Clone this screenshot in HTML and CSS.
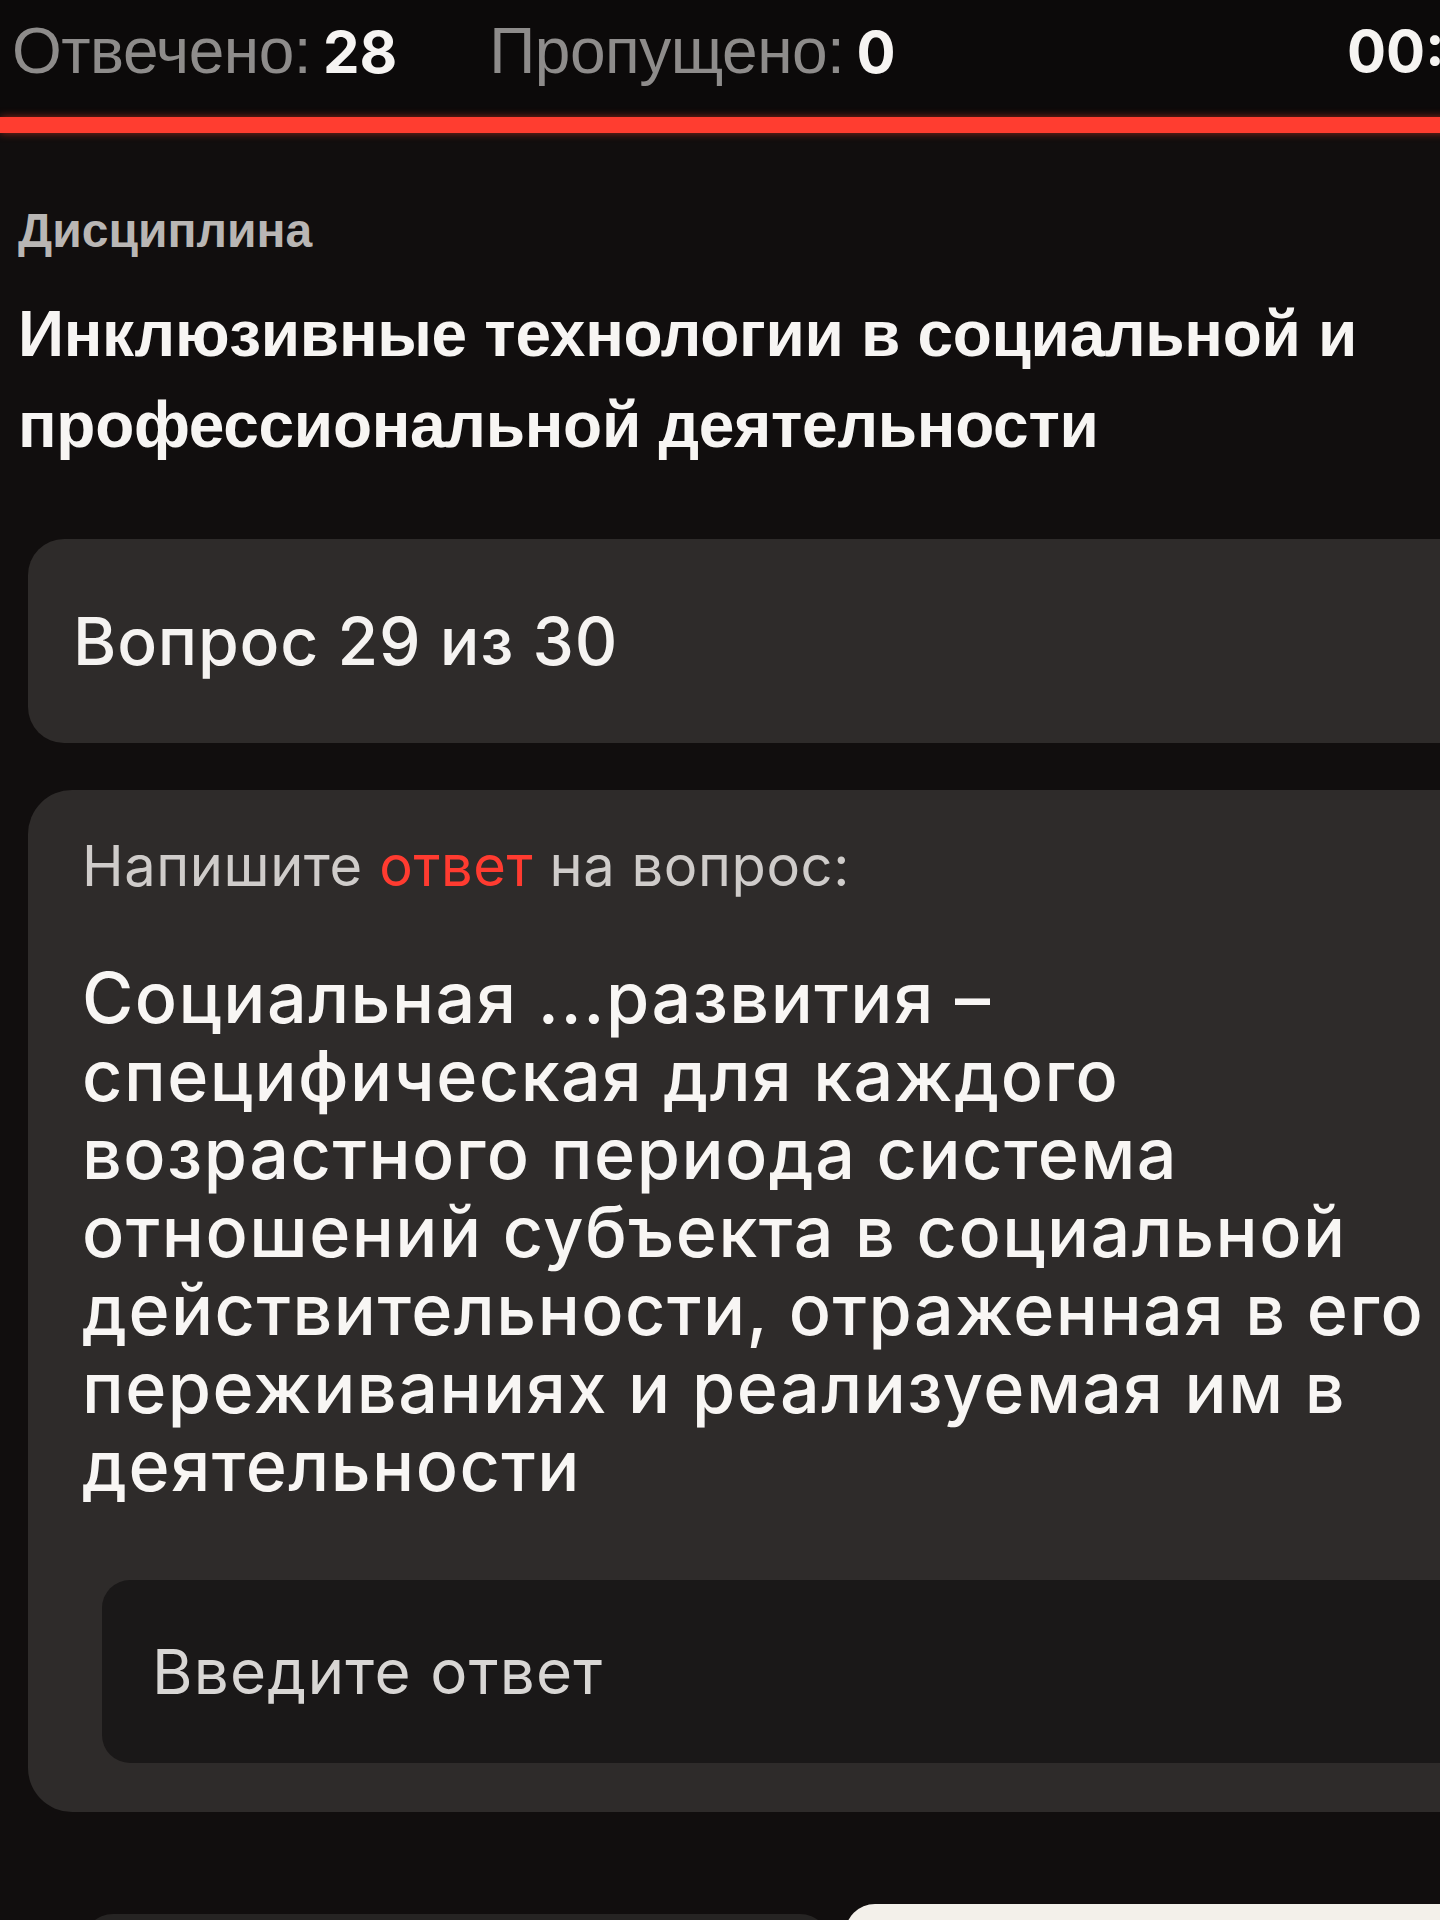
FILE: index.html
```html
<!DOCTYPE html>
<html lang="ru">
<head>
<meta charset="utf-8">
<title>Вопрос 29 из 30</title>
<link rel="stylesheet" href="styles.css">
</head>
<body>
<div class="viewport">
  <div class="page">
    <header class="stats">
      <div class="stat"><span class="stat-label">Отвечено:</span> <span class="stat-value">28</span></div>
      <div class="stat"><span class="stat-label">Пропущено:</span> <span class="stat-value">0</span></div>
      <div class="timer">00:14</div>
    </header>
    <div class="progress"></div>

    <section class="discipline">
      <div class="discipline-label">Дисциплина</div>
      <h1 class="discipline-title">Инклюзивные технологии в социальной и<br>профессиональной деятельности</h1>
    </section>

    <div class="card card-counter">
      <span class="counter-text">Вопрос 29 из 30</span>
    </div>

    <div class="card card-question">
      <p class="prompt">Напишите <span class="accent">ответ</span> на вопрос:</p>
      <p class="question">Социальная ...развития –<br>специфическая для каждого<br>возрастного периода система<br>отношений субъекта в социальной<br>действительности, отраженная в его<br>переживаниях и реализуемая им в<br>деятельности</p>
      <div class="answer-input">
        <span class="placeholder">Введите ответ</span>
      </div>
    </div>

    <div class="actions">
      <div class="btn btn-secondary"></div>
      <div class="btn btn-primary"></div>
    </div>
  </div>
</div>
</body>
</html>
```

FILE: styles.css
```css
html, body {
  margin: 0;
  padding: 0;
  background: #0e0c0c;
}

.viewport {
  width: 1440px;
  height: 1920px;
  overflow: hidden;
  background: #110e0e;
}

.page {
  width: 1600px;
}

.stats {
  box-sizing: border-box;
  height: 117px;
  padding: 0 53px 15px 12px;
  display: flex;
  align-items: center;
  gap: 92px;
  background: #0c0a0a;
}

.stat {
  display: flex;
  align-items: baseline;
  gap: 12px;
  white-space: nowrap;
}

.stat-label {
  font-family: "Liberation Sans", Arial, sans-serif;
  font-size: 64px;
  letter-spacing: -0.5px;
  color: #8e8c8b;
}

.stat-value {
  font-family: Inter, "Liberation Sans", sans-serif;
  font-weight: 700;
  font-size: 58px;
  color: #f6f4f2;
}

.timer {
  margin-left: auto;
  width: 200px;
  font-family: Inter, "Liberation Sans", sans-serif;
  font-weight: 700;
  font-size: 58px;
  color: #f6f4f2;
  white-space: nowrap;
}

.progress {
  height: 16px;
  background: #ff3d30;
  box-shadow: 0 0 8px rgba(255, 60, 40, 0.55);
}

.discipline {
  padding: 70px 0 0 18px;
  font-family: "Liberation Sans", Arial, sans-serif;
}

.discipline-label {
  font-size: 48px;
  line-height: 55px;
  font-weight: 700;
  color: #b9b6b4;
}

.discipline-title {
  margin: 31px 0 0;
  font-size: 64px;
  line-height: 91px;
  font-weight: 700;
  color: #f7f5f3;
  letter-spacing: -0.3px;
}

.card {
  margin-left: 28px;
  background: #2e2b2a;
  border-radius: 36px;
  font-family: Inter, "Noto Sans", sans-serif;
}

.card-counter {
  margin-top: 68px;
  height: 204px;
  display: flex;
  align-items: center;
  padding-left: 45px;
}

.counter-text {
  font-size: 66px;
  font-weight: 500;
  color: #f5f3f1;
  letter-spacing: 0.8px;
}

.card-question {
  margin-top: 47px;
  padding: 43px 0 49px 54px;
  border-radius: 44px;
}

.prompt {
  margin: 0;
  font-size: 56px;
  line-height: 67px;
  font-weight: 400;
  color: #cfccca;
  letter-spacing: 0.6px;
}

.accent {
  color: #ff3b30;
}

.question {
  margin: 59px 0 0;
  font-size: 70px;
  line-height: 78px;
  font-weight: 500;
  color: #f8f6f4;
  letter-spacing: 1.5px;
}

.answer-input {
  margin: 75px 0 0 20px;
  height: 183px;
  box-sizing: border-box;
  padding-left: 50px;
  display: flex;
  align-items: center;
  background: #1a1818;
  border-radius: 28px;
}

.placeholder {
  font-size: 62px;
  font-weight: 400;
  color: #d8d6d4;
  letter-spacing: 1.2px;
}

.actions {
  display: flex;
  gap: 15px;
  padding-left: 83px;
  margin-top: 92px;
}

.btn {
  height: 120px;
  border-radius: 30px;
}

.btn-secondary {
  width: 747px;
  margin-top: 10px;
  background: #262423;
}

.btn-primary {
  flex: 1;
  background: #f3f0ea;
}
```
